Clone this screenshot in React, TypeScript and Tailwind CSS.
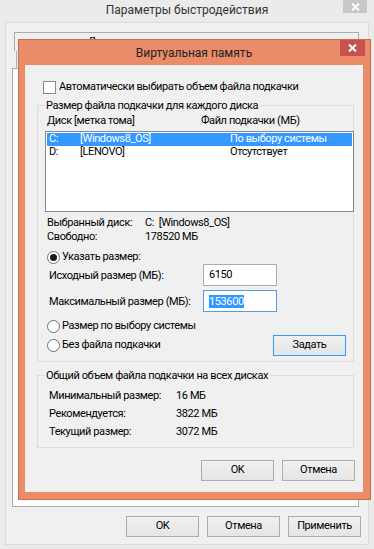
import React from 'react';

const CloseGlyph = () => (
  <svg width="9" height="8" viewBox="0 0 9 8">
    <path d="M1 0.5 L8 7.5 M8 0.5 L1 7.5" stroke="#ffffff" strokeWidth="2" />
  </svg>
);

const Btn = ({ children, blue }: { children: React.ReactNode; blue?: boolean }) => (
  <div
    className={`flex h-[21px] w-[73px] items-center justify-center border bg-linear-to-b from-[#f0f0f0] to-[#e5e5e5] ${
      blue ? 'border-[#3399ff]' : 'border-[#acacac]'
    }`}
  >
    {children}
  </div>
);

const Radio = ({ checked }: { checked?: boolean }) => (
  <div className="flex h-[13px] w-[13px] shrink-0 items-center justify-center rounded-full border border-[#707070] bg-white">
    {checked && <div className="h-[7px] w-[7px] rounded-full bg-[#1a1a1a]" />}
  </div>
);

const Group = ({ title, children, className }: { title: string; children: React.ReactNode; className?: string }) => (
  <div className={`flex flex-col border border-[#dcdcdc] ${className ?? ''}`}>
    <div className="-mt-[8px] ml-[7px] h-[15px] w-fit bg-[#f0f0f0] px-[1px] leading-[15px]">{title}</div>
    {children}
  </div>
);

export default function App() {
  return (
    <div className="relative h-[549px] w-[374px] overflow-hidden whitespace-nowrap bg-[#ebebeb] font-['Roboto','Noto_Sans',sans-serif] text-[11px] tracking-[-0.4px] text-black">
      {/* background window: Параметры быстродействия */}
      <div className="h-[22px] text-center text-[12px] leading-[21px] tracking-normal text-[#333]">Параметры быстродействия</div>
      <div className="absolute right-[7px] top-0 flex h-[13px] w-[24px] items-center justify-center bg-[#c7c7c7]">
        <CloseGlyph />
      </div>

      <div className="ml-[5px] flex h-[523px] w-[364px] flex-col border border-[#dadada] bg-[#f0f0f0] pt-[9px]">
        <div className="ml-[8px] h-[19px] w-[345px] border-x border-t border-[#acacac] pl-[73px] pt-[1px] leading-[15px]">
          Дополнительно
        </div>
        <div className="ml-[10px] h-[17px] border-l border-[#acacac]" />
        <div className="ml-[6px] h-[439px] w-[347px] border border-[#acacac] bg-white" />
        <div className="mt-[9px] flex justify-end gap-[8px] pr-[7px]">
          <Btn>OK</Btn>
          <Btn>Отмена</Btn>
          <Btn>Применить</Btn>
        </div>
      </div>

      {/* dialog: Виртуальная память */}
      <div className="absolute left-[18px] top-[39px] flex h-[461px] w-[353px] flex-col border border-[#c66e4d] bg-[#ea8c67] pb-[7px] pl-[6px] pr-[7px]">
        <div className="flex h-[25px] items-center justify-center text-[12px] tracking-normal text-[#222]">Виртуальная память</div>
        <div className="absolute right-[5px] top-0 flex h-[16px] w-[25px] items-center justify-center bg-[#c75050]">
          <CloseGlyph />
        </div>

        <div className="flex flex-1 flex-col bg-[#f0f0f0] pl-[12px] pr-[9px]">
          <div className="ml-[6px] mt-[16px] flex h-[13px] items-center gap-[3px]">
            <div className="h-[13px] w-[13px] border border-[#8a8a8a] bg-white" />
            <span>Автоматически выбирать объем файла подкачки</span>
          </div>

          <Group title="Размер файла подкачки для каждого диска" className="mt-[11px] pb-[5px]">
            <div className="mt-[1px] flex h-[15px] items-center pl-[9px]">
              <span className="w-[154px] shrink-0">Диск [метка тома]</span>
              <span>Файл подкачки (МБ)</span>
            </div>
            <div className="-mr-[1px] ml-[7px] mt-[2px] h-[81px] border border-[#828790] bg-white p-[1px]">
              <div className="flex h-[13px] items-center bg-[#3399ff] pl-[2px] text-white">
                <span className="w-[31px] shrink-0">C:</span>
                <span className="w-[150px] shrink-0">[Windows8_OS]</span>
                <span>По выбору системы</span>
              </div>
              <div className="flex h-[13px] items-center pl-[2px]">
                <span className="w-[31px] shrink-0">D:</span>
                <span className="w-[150px] shrink-0">[LENOVO]</span>
                <span>Отсутствует</span>
              </div>
            </div>
            <div className="mt-[4px] flex h-[14px] items-center pl-[9px]">
              <span className="w-[98px] shrink-0">Выбранный диск:</span>
              <span>C:&nbsp; [Windows8_OS]</span>
            </div>
            <div className="flex h-[14px] items-center pl-[9px]">
              <span className="w-[98px] shrink-0">Свободно:</span>
              <span>178520 МБ</span>
            </div>

            <div className="mt-[7px] flex h-[13px] items-center gap-[2px] pl-[9px]">
              <Radio checked />
              <span>Указать размер:</span>
            </div>
            <div className="flex h-[22px] items-center pl-[11px]">
              <span className="w-[154px] shrink-0 pt-[2px]">Исходный размер (МБ):</span>
              <div className="flex h-[22px] w-[74px] items-center border border-[#ababab] bg-white pl-[5px]">6150</div>
            </div>
            <div className="mt-[4px] flex h-[22px] items-center pl-[11px]">
              <span className="w-[154px] shrink-0 pt-[2px]">Максимальный размер (МБ):</span>
              <div className="flex h-[22px] w-[74px] items-center border border-[#569de5] bg-white pl-[5px]">
                <span className="bg-[#3399ff] leading-[13px] text-white">153600</span>
              </div>
            </div>

            <div className="mt-[7px] flex pl-[9px] pr-[7px]">
              <div className="flex flex-1 flex-col">
                <div className="flex h-[14px] items-center gap-[2px]">
                  <Radio />
                  <span>Размер по выбору системы</span>
                </div>
                <div className="mt-[5px] flex h-[14px] items-center gap-[2px]">
                  <Radio />
                  <span>Без файла подкачки</span>
                </div>
              </div>
              <div className="mt-[16px]">
                <Btn blue>Задать</Btn>
              </div>
            </div>
          </Group>

          <Group title="Общий объем файла подкачки на всех дисках" className="mt-[13px] pb-[6px]">
            <div className="mt-[4px] flex h-[18px] items-center pl-[11px]">
              <span className="w-[127px] shrink-0">Минимальный размер:</span>
              <span>16 МБ</span>
            </div>
            <div className="flex h-[18px] items-center pl-[11px]">
              <span className="w-[127px] shrink-0">Рекомендуется:</span>
              <span>3822 МБ</span>
            </div>
            <div className="flex h-[18px] items-center pl-[11px]">
              <span className="w-[127px] shrink-0">Текущий размер:</span>
              <span>3072 МБ</span>
            </div>
          </Group>

          <div className="-mr-[1px] mt-[12px] flex justify-end gap-[8px]">
            <Btn>OK</Btn>
            <Btn>Отмена</Btn>
          </div>
        </div>
      </div>
    </div>
  );
}
